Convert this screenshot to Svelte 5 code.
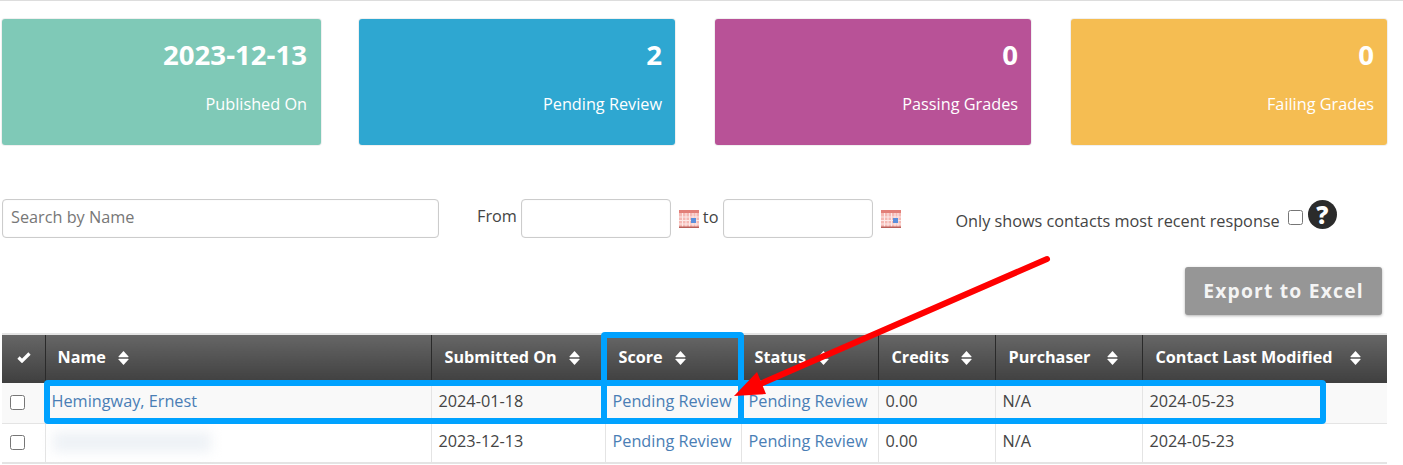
<script>
	let cards = [
		{ value: '2023-12-13', label: 'Published On', color: '#7fc9b7' },
		{ value: '2', label: 'Pending Review', color: '#2ea7d1' },
		{ value: '0', label: 'Passing Grades', color: '#b85297' },
		{ value: '0', label: 'Failing Grades', color: '#f5bd52' }
	];
	let columns = [
		{ name: 'Name', width: 386, gap: 12 },
		{ name: 'Submitted On', width: 174, gap: 12 },
		{ name: 'Score', width: 136, gap: 12 },
		{ name: 'Status', width: 137, gap: 12 },
		{ name: 'Credits', width: 117, gap: 12 },
		{ name: 'Purchaser', width: 147, gap: 17 },
		{ name: 'Contact Last Modified', width: 245, gap: 17 }
	];
	let rows = [
		{ name: 'Hemingway, Ernest', submitted: '2024-01-18', modified: '2024-05-23' },
		{ name: '', submitted: '2023-12-13', modified: '2024-05-23' }
	];
</script>

{#snippet calendar()}
	<svg class="cal" width="20" height="18" viewBox="0 0 20 18">
		<rect x="0" y="0" width="20" height="18" fill="#f5b9b4" />
		<rect x="0" y="0" width="20" height="3" fill="#e27f78" />
		<path d="M0 7h20M0 10.500h20M0 14h20M3.500 3v15M7 3v15M10.500 3v15M14 3v15M17 3v15" stroke="#fff" stroke-width="1" opacity=".7" />
		<rect x="12" y="8" width="5" height="5" fill="#5b8fdc" />
		<rect x="0" y="16.500" width="20" height="1.500" fill="#b9605a" />
	</svg>
{/snippet}

{#snippet sort()}
	<svg class="sort" width="11" height="16" viewBox="0 0 11 16">
		<path d="M5.500 1 10.500 6.600Q10.800 7.200 10 7.200H1Q.2 7.200 .5 6.600Z" fill="#fff" />
		<path d="M5.500 15 10.500 9.400Q10.800 8.800 10 8.800H1Q.2 8.800 .5 9.400Z" fill="#fff" />
	</svg>
{/snippet}

<main>
	<section class="cards">
		{#each cards as card}
			<div class="card" style="background: {card.color}">
				<div class="value">{card.value}</div>
				<div class="label">{card.label}</div>
			</div>
		{/each}
	</section>

	<section class="filters">
		<input class="search" type="text" placeholder="Search by Name" />
		<div class="range">
			<span class="from">From</span>
			<input class="date" type="text" />
			{@render calendar()}
			<span class="to">to</span>
			<input class="date" type="text" />
			{@render calendar()}
		</div>
		<div class="recent">
			<span>Only shows contacts most recent response</span>
			<input type="checkbox" />
			<b class="help">?</b>
		</div>
	</section>

	<div class="actions">
		<button>Export to Excel</button>
	</div>

	<table>
		<colgroup>
			<col style="width: 43px" />
			{#each columns as col}
				<col style="width: {col.width}px" />
			{/each}
		</colgroup>
		<thead>
			<tr>
				<th class="check">
					<svg width="14" height="12" viewBox="0 0 14 12"><path d="M1.500 6.500 5 10 12.500 2.500" fill="none" stroke="#fff" stroke-width="3.200" /></svg>
				</th>
				{#each columns as col}
					<th>{col.name}<span style="margin-left: {col.gap}px">{@render sort()}</span></th>
				{/each}
			</tr>
		</thead>
		<tbody>
			{#each rows as row}
				<tr>
					<td class="check"><input type="checkbox" /></td>
					<td class="namecell">
						{#if row.name}
							<a href="#top">{row.name}</a>
						{:else}
							<span class="blurred"></span>
						{/if}
					</td>
					<td>{row.submitted}</td>
					<td><a href="#top">Pending Review</a></td>
					<td><a href="#top">Pending Review</a></td>
					<td>0.00</td>
					<td>N/A</td>
					<td>{row.modified}</td>
				</tr>
			{/each}
		</tbody>
	</table>

	<!-- annotations drawn over the page -->
	<svg class="marks" width="1403" height="465" viewBox="0 0 1403 465">
		<rect x="47" y="383" width="1276" height="38" rx="1" fill="none" stroke="#00a2ff" stroke-width="6" />
		<rect x="604" y="335" width="137" height="86" rx="1" fill="none" stroke="#00a2ff" stroke-width="6" />
		<path d="M1047 259 760 384" stroke="#ff0000" stroke-width="6" stroke-linecap="round" fill="none" />
		<path d="M734 396 757 372 766 394Z" fill="#ff0000" />
	</svg>
</main>

<style>
	:global(body) {
		margin: 0;
		background: #fff;
	}

	main {
		position: relative;
		width: 1403px;
		height: 465px;
		overflow: hidden;
		box-sizing: border-box;
		border-top: 1px solid #ddd;
		padding: 18px 16px 0 2px;
		font-family: "Open Sans", sans-serif;
		font-size: 16.25px;
		color: #444;
	}

	.cards {
		display: flex;
		gap: 40px;
	}

	.card {
		width: 316px;
		height: 126px;
		box-sizing: border-box;
		border-radius: 3px;
		box-shadow: 0 0 0 1px rgba(0, 0, 0, 0.06);
		padding: 15px 13px 0 0;
		text-align: right;
		color: #fff;
	}

	.card:first-child {
		width: 319px;
		margin-right: -2px;
		padding-right: 14px;
	}

	.value {
		font-size: 27.6px;
		font-weight: 700;
		line-height: 40px;
	}

	.label {
		margin-top: 19px;
		line-height: 22px;
	}

	.filters {
		display: flex;
		align-items: flex-start;
		margin-top: 54px;
	}

	input[type="text"] {
		box-sizing: border-box;
		height: 39px;
		border: 1px solid #ccc;
		border-radius: 4px;
		box-shadow: inset 0 0 1px rgba(0, 0, 0, 0.15);
		background: #fff;
		font: 16.25px "Open Sans", sans-serif;
		outline: none;
	}

	.search {
		width: 437px;
		padding: 0 8px 3px;
	}

	.search::placeholder {
		color: #777;
		opacity: 1;
	}

	.range {
		display: flex;
		align-items: center;
		margin-left: 38px;
		height: 39px;
	}

	.from {
		margin-right: 4px;
		position: relative;
		top: -3px;
	}

	.to {
		margin: 0 5px 0 4px;
		position: relative;
		top: -2px;
	}

	.date {
		width: 150px;
	}

	.cal {
		margin-left: 8px;
	}

	.recent {
		display: flex;
		align-items: flex-start;
		margin-left: 54px;
		height: 39px;
	}

	.recent span {
		margin-top: 11px;
		line-height: 22px;
		white-space: nowrap;
	}

	.recent input {
		width: 15px;
		height: 15px;
		margin: 11px 0 0 8px;
	}

	.help {
		width: 29px;
		height: 29px;
		margin: 1px 0 0 5px;
		border-radius: 50%;
		background: #2b2b2b;
		color: #fff;
		font-size: 24px;
		font-weight: 800;
		line-height: 29px;
		text-align: center;
	}

	.actions {
		display: flex;
		justify-content: flex-end;
		margin: 29px 5px 0 0;
	}

	button {
		width: 197px;
		height: 48px;
		border: 0;
		border-radius: 3px;
		background: #969696;
		box-shadow: 0 1px 3px rgba(0, 0, 0, 0.3);
		color: #f4f4f4;
		font: 700 19.3px "Open Sans", sans-serif;
		letter-spacing: 1.2px;
		padding: 0 0 2px;
	}

	table {
		width: 1385px;
		table-layout: fixed;
		border-collapse: collapse;
		margin-top: 18px;
		border-top: 2px solid #e4e4e4;
	}

	th {
		height: 49px;
		box-sizing: border-box;
		padding: 0 0 5px 13px;
		text-align: left;
		background: linear-gradient(#666, #3f3f3f);
		border-left: 1px solid #2a2a2a;
		color: #fff;
		font-size: 16.2px;
		font-weight: 700;
		white-space: nowrap;
	}

	th:first-child {
		border-left: 0;
	}

	th:nth-child(2) {
		padding-left: 12px;
	}

	th span {
		display: inline-block;
		vertical-align: -3px;
	}

	.sort {
		display: block;
	}

	th.check {
		padding: 0 0 4px 1px;
		text-align: center;
	}

	td {
		height: 40px;
		box-sizing: border-box;
		padding: 0 0 4px 7px;
		border: 1px solid #e4e4e4;
		border-top: 0;
		white-space: nowrap;
	}

	td:first-child {
		border-left: 0;
	}

	td:last-child {
		border-right: 0;
	}

	tbody tr:first-child td {
		background: #f9f9f9;
		border-bottom-width: 1px;
	}

	tbody tr:last-child td {
		border-bottom-width: 2px;
		padding-bottom: 3px;
	}

	td.check,
	tbody tr td.check {
		padding: 0 0 0 8px;
		text-align: left;
	}

	td.check input {
		display: block;
		width: 15px;
		height: 15px;
		margin: 0;
	}

	td a {
		color: #4a7eb5;
		text-decoration: none;
	}

	td.namecell {
		padding-left: 6px;
	}

	.blurred {
		display: block;
		width: 158px;
		height: 20px;
		background: #eef2f6;
		filter: blur(6px);
		margin: 2px 0 0 1px;
	}

	.marks {
		position: absolute;
		top: -1px;
		left: 0;
		pointer-events: none;
	}
</style>
